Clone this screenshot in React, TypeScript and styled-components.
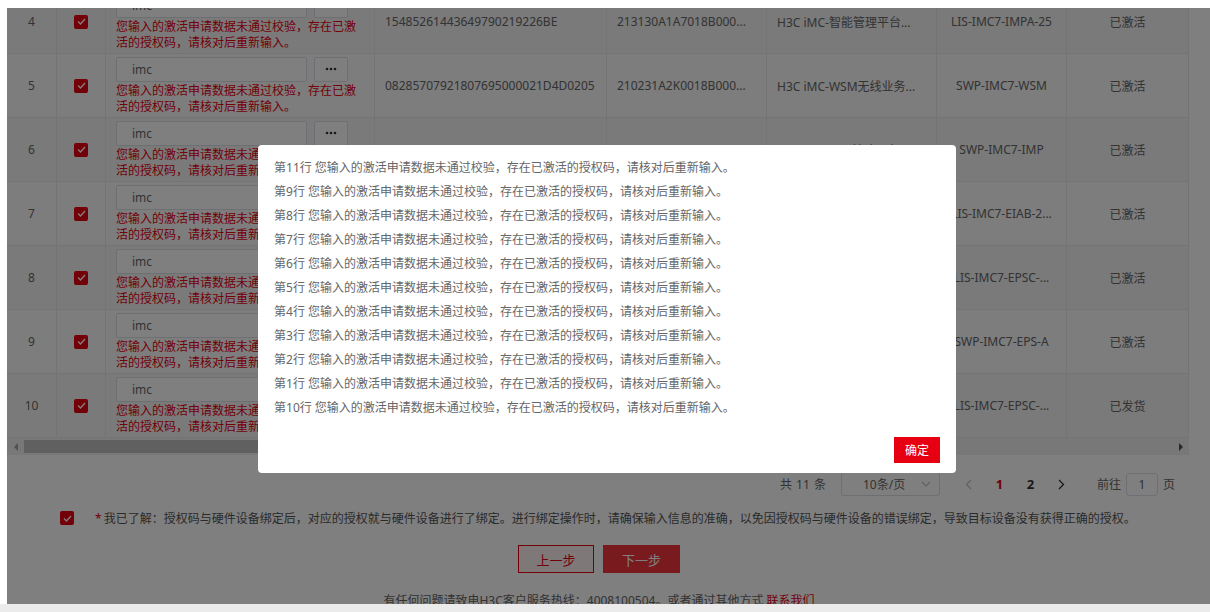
import React from "react";
import styled, { createGlobalStyle } from "styled-components";

const RED = "#e60012";
const LINE = "#e8e8e8";
const COLS = "50px 49px 269px 232px 160px 170px 130px 122px";

const GlobalStyle = createGlobalStyle`
  html, body {
    margin: 0;
    padding: 0;
    background: #fff;
  }
  body {
    font-family: "Noto Sans", "Noto Sans CJK SC", sans-serif;
    font-size: 12px;
    color: #666;
  }
  * { box-sizing: border-box; }
`;

const Page = styled.div`
  width: 1210px;
  height: 612px;
  padding: 8px 0 0 7px;
  display: flex;
  flex-direction: column;
  overflow: hidden;
`;

const Frame = styled.div`
  position: relative;
  height: 596px;
  overflow: hidden;
  background: #fff;
`;

const BottomBar = styled.div`
  height: 8px;
  margin-left: -7px;
  background: #ebebeb;
`;

const Content = styled.div`
  width: 1184px;
  display: flex;
  flex-direction: column;
`;

const TableViewport = styled.div`
  width: 1182px;
  height: 430px;
  overflow: hidden;
`;

// body is scrolled: row 4 is the first one, partly above the viewport
const TableBody = styled.div`
  margin-top: -18px;
`;

const Row = styled.div<{ $striped: boolean }>`
  display: grid;
  grid-template-columns: ${COLS};
  height: 64px;
  background: ${(p) => (p.$striped ? "#f4f4f4" : "#fafafa")};
`;

const Cell = styled.div<{ $align?: "left" | "center" }>`
  display: flex;
  align-items: center;
  justify-content: ${(p) => (p.$align === "left" ? "flex-start" : "center")};
  padding: ${(p) => (p.$align === "left" ? "0 10px" : "0 4px")};
  border-right: 1px solid ${LINE};
  border-bottom: 1px solid ${LINE};
  color: #666;
  white-space: nowrap;
  overflow: hidden;
`;

const CodeCell = styled.div`
  display: flex;
  flex-direction: column;
  justify-content: center;
  padding: 0 10px;
  border-right: 1px solid ${LINE};
  border-bottom: 1px solid ${LINE};
  overflow: hidden;
`;

const InputLine = styled.div`
  display: flex;
  gap: 7px;
`;

const CodeInput = styled.div`
  width: 191px;
  height: 25px;
  padding: 0 15px;
  border: 1px solid #dcdfe6;
  border-radius: 2px;
  background: #fff;
  color: #666;
  line-height: 23px;
`;

const MoreButton = styled.div`
  width: 34px;
  height: 25px;
  border: 1px solid #dcdfe6;
  border-radius: 2px;
  background: #fff;
  display: flex;
  align-items: center;
  justify-content: center;
`;

const ErrorText = styled.div`
  margin-top: 1px;
  width: 245px;
  color: ${RED};
  line-height: 16px;
  white-space: normal;
`;

const Check = styled.span`
  width: 14px;
  height: 14px;
  border-radius: 2px;
  background: ${RED};
  display: inline-flex;
  align-items: center;
  justify-content: center;
  flex-shrink: 0;
`;

const HScroll = styled.div`
  width: 1182px;
  height: 17px;
  display: flex;
  align-items: center;
  background: #f1f1f1;
`;

const Arrow = styled.span<{ $dir: "left" | "right" }>`
  width: 17px;
  height: 17px;
  display: flex;
  align-items: center;
  justify-content: center;
  &::before {
    content: "";
    border-top: 4px solid transparent;
    border-bottom: 4px solid transparent;
    ${(p) =>
      p.$dir === "left"
        ? "border-right: 4px solid #a3a3a3;"
        : "border-left: 4px solid #505050;"}
  }
`;

const Track = styled.div`
  flex: 1;
  height: 13px;
  display: flex;
`;

const Thumb = styled.div`
  width: 860px;
  height: 13px;
  background: #c1c1c1;
`;

const Pager = styled.div`
  margin-top: 17px;
  height: 24px;
  padding-right: 16px;
  display: flex;
  align-items: center;
  justify-content: flex-end;
  color: #666;
  font-size: 12px;
`;

const Total = styled.span`
  margin-right: 15px;
  word-spacing: 1px;
`;

const SizeSelect = styled.div`
  width: 99px;
  height: 24px;
  border: 1px solid #dcdfe6;
  border-radius: 3px;
  display: flex;
  align-items: center;
  justify-content: space-between;
  padding: 0 8px 0 21px;
  color: #666;
  font-size: 12px;
  margin-right: 13px;
`;

const PageBtn = styled.span<{ $active?: boolean; $disabled?: boolean }>`
  width: 31px;
  height: 24px;
  display: flex;
  align-items: center;
  justify-content: center;
  font-weight: bold;
  font-size: 13px;
  color: ${(p) => (p.$active ? RED : p.$disabled ? "#c0c4cc" : "#303133")};
`;

const Jumper = styled.span`
  margin-left: 20px;
  display: flex;
  align-items: center;
  gap: 5px;
`;

const JumpInput = styled.span`
  width: 32px;
  height: 23px;
  border: 1px solid #dcdfe6;
  border-radius: 3px;
  display: flex;
  align-items: center;
  justify-content: center;
  font-size: 12px;
`;

const Agree = styled.div`
  margin-top: 12px;
  height: 20px;
  padding-left: 53px;
  display: flex;
  align-items: center;
  color: #555;
`;

const Star = styled.span`
  color: ${RED};
  margin: 0 2px 0 21px;
`;

const Actions = styled.div`
  margin-top: 17px;
  display: flex;
  justify-content: center;
  gap: 9px;
`;

const StepButton = styled.div<{ $primary?: boolean }>`
  width: ${(p) => (p.$primary ? 77 : 76)}px;
  height: 28px;
  display: flex;
  align-items: center;
  justify-content: center;
  font-size: 13px;
  border: 1px solid ${(p) => (p.$primary ? "#f2343c" : RED)};
  background: ${(p) => (p.$primary ? "#f2343c" : "#fff0f0")};
  color: ${(p) => (p.$primary ? "#fff" : RED)};
`;

const Footer = styled.div`
  margin-top: 18px;
  line-height: 20px;
  text-align: center;
  color: #666;
  a {
    color: ${RED};
    text-decoration: underline;
  }
`;

const Mask = styled.div`
  position: absolute;
  inset: 0;
  background: rgba(0, 0, 0, 0.5);
`;

const Modal = styled.div`
  position: absolute;
  left: 251px;
  top: 137px;
  width: 698px;
  background: #fff;
  border-radius: 4px;
  padding: 11px 16px 10px;
  display: flex;
  flex-direction: column;
`;

const MessageLine = styled.div`
  line-height: 24px;
  color: #666;
  font-size: 12px;
`;

const ModalFoot = styled.div`
  margin-top: 17px;
  display: flex;
  justify-content: flex-end;
`;

const OkButton = styled.button`
  width: 46px;
  height: 26px;
  border: none;
  background: ${RED};
  color: #fff;
  font-family: inherit;
  font-size: 12px;
  padding: 0;
`;

const CheckIcon = () => (
  <svg width="9" height="7" viewBox="0 0 9 7">
    <path d="M1 3.5 L3.5 6 L8 1" stroke="#fff" strokeWidth="1.3" fill="none" />
  </svg>
);

const DotsIcon = () => (
  <svg width="12" height="4" viewBox="0 0 12 4">
    <circle cx="2" cy="2" r="1.3" fill="#333" />
    <circle cx="6" cy="2" r="1.3" fill="#333" />
    <circle cx="10" cy="2" r="1.3" fill="#333" />
  </svg>
);

const rows = [
  { no: 4, sn: "15485261443649790219226BE", dev: "213130A1A7018B000...", prod: "H3C iMC-智能管理平台...", code: "LIS-IMC7-IMPA-25", status: "已激活" },
  { no: 5, sn: "08285707921807695000021D4D0205", dev: "210231A2K0018B000...", prod: "H3C iMC-WSM无线业务...", code: "SWP-IMC7-WSM", status: "已激活" },
  { no: 6, sn: "21023516270908007432", dev: "219801A1NK018B000...", prod: "H3C iMC-IMP基础平台...", code: "SWP-IMC7-IMP", status: "已激活" },
  { no: 7, sn: "30418826514570911206A2", dev: "210235A2CT018B000...", prod: "H3C iMC-EIA用户接入...", code: "LIS-IMC7-EIAB-2...", status: "已激活" },
  { no: 8, sn: "61720459318806234010", dev: "210235A1JH018B000...", prod: "H3C iMC-EPS终端准入...", code: "LIS-IMC7-EPSC-...", status: "已激活" },
  { no: 9, sn: "77210569203318870921C0", dev: "210235A2DJ018B000...", prod: "H3C iMC-EPS终端准入...", code: "SWP-IMC7-EPS-A", status: "已激活" },
  { no: 10, sn: "90216731150274486102", dev: "210235A2DK018B000...", prod: "H3C iMC-EPS终端准入...", code: "LIS-IMC7-EPSC-...", status: "已发货" },
];

const messages = ["11", "9", "8", "7", "6", "5", "4", "3", "2", "1", "10"];

const App: React.FC = () => {
  return (
    <>
      <GlobalStyle />
      <Page>
        <Frame>
          <Content>
            <TableViewport>
              <TableBody>
                {rows.map((r) => (
                  <Row key={r.no} $striped={r.no % 2 === 0}>
                    <Cell>{r.no}</Cell>
                    <Cell>
                      <Check>
                        <CheckIcon />
                      </Check>
                    </Cell>
                    <CodeCell>
                      <InputLine>
                        <CodeInput>imc</CodeInput>
                        <MoreButton>
                          <DotsIcon />
                        </MoreButton>
                      </InputLine>
                      <ErrorText>
                        您输入的激活申请数据未通过校验，存在已激活的授权码，请核对后重新输入。
                      </ErrorText>
                    </CodeCell>
                    <Cell $align="left">{r.sn}</Cell>
                    <Cell $align="left">{r.dev}</Cell>
                    <Cell $align="left">{r.prod}</Cell>
                    <Cell>{r.code}</Cell>
                    <Cell>{r.status}</Cell>
                  </Row>
                ))}
              </TableBody>
            </TableViewport>
            <HScroll>
              <Arrow $dir="left" />
              <Track>
                <Thumb />
              </Track>
              <Arrow $dir="right" />
            </HScroll>

            <Pager>
              <Total>共 11 条</Total>
              <SizeSelect>
                <span>10条/页</span>
                <svg width="10" height="6" viewBox="0 0 10 6">
                  <path d="M1 1 L5 5 L9 1" stroke="#c0c4cc" strokeWidth="1.2" fill="none" />
                </svg>
              </SizeSelect>
              <PageBtn $disabled>
                <svg width="7" height="11" viewBox="0 0 7 11">
                  <path d="M6 1 L1.5 5.5 L6 10" stroke="#c0c4cc" strokeWidth="1.3" fill="none" />
                </svg>
              </PageBtn>
              <PageBtn $active>1</PageBtn>
              <PageBtn>2</PageBtn>
              <PageBtn>
                <svg width="7" height="11" viewBox="0 0 7 11">
                  <path d="M1 1 L5.5 5.5 L1 10" stroke="#303133" strokeWidth="1.3" fill="none" />
                </svg>
              </PageBtn>
              <Jumper>
                前往
                <JumpInput>1</JumpInput>
                页
              </Jumper>
            </Pager>

            <Agree>
              <Check>
                <CheckIcon />
              </Check>
              <Star>*</Star>
              我已了解：授权码与硬件设备绑定后，对应的授权就与硬件设备进行了绑定。进行绑定操作时，请确保输入信息的准确，以免因授权码与硬件设备的错误绑定，导致目标设备没有获得正确的授权。
            </Agree>

            <Actions>
              <StepButton>上一步</StepButton>
              <StepButton $primary>下一步</StepButton>
            </Actions>

            <Footer>
              有任何问题请致电H3C客户服务热线：4008100504。或者通过其他方式 <a>联系我们</a>
            </Footer>
          </Content>

          <Mask />

          <Modal>
            {messages.map((m) => (
              <MessageLine key={m}>
                第{m}行 您输入的激活申请数据未通过校验，存在已激活的授权码，请核对后重新输入。
              </MessageLine>
            ))}
            <ModalFoot>
              <OkButton>确定</OkButton>
            </ModalFoot>
          </Modal>
        </Frame>
        <BottomBar />
      </Page>
    </>
  );
};

export default App;
